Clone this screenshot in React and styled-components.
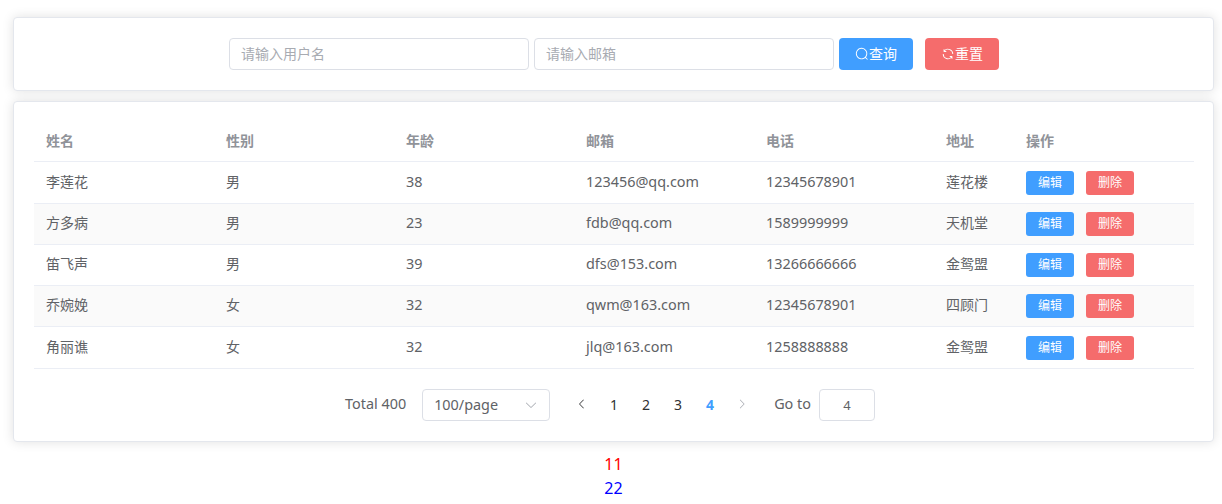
import React from 'react';
import styled, { createGlobalStyle } from 'styled-components';

const GlobalStyle = createGlobalStyle`
    html, body {
        margin: 0;
        padding: 0;
        background: #fff;
    }
    body {
        font-family: "Noto Sans", "Noto Sans CJK SC", sans-serif;
        font-size: 14px;
        color: #606266;
    }
    * {
        box-sizing: border-box;
    }
`;

const Page = styled.div`
    padding: 17px 8px 0 13px;
`;

const Card = styled.div`
    background: #fff;
    border: 1px solid #e4e7ed;
    border-radius: 4px;
    box-shadow: 0 0 12px rgba(0, 0, 0, 0.12);
`;

const SearchCard = styled(Card)`
    height: 74px;
    margin-bottom: 10px;
    padding-left: 215px;
    display: flex;
    align-items: center;
`;

const TextField = styled.input`
    width: 300px;
    height: 32px;
    margin-right: 5px;
    padding: 0 11px 2px;
    border: 1px solid #dcdfe6;
    border-radius: 4px;
    outline: none;
    font: inherit;
    color: #606266;

    &::placeholder {
        color: #a8abb2;
    }
`;

const Button = styled.button`
    display: inline-flex;
    align-items: center;
    justify-content: center;
    width: ${p => (p.$small ? '48px' : '74px')};
    height: ${p => (p.$small ? '24px' : '32px')};
    padding: 0 0 2px;
    border: none;
    border-radius: ${p => (p.$small ? '3px' : '4px')};
    background: ${p => (p.$danger ? '#f56c6c' : '#409eff')};
    color: #fff;
    font-family: inherit;
    font-size: ${p => (p.$small ? '12px' : '14px')};
    margin-left: ${p => p.$gap || 0}px;

    svg {
        width: 14px;
        height: 14px;
        margin-top: 2px;
    }
`;

const TableCard = styled(Card)`
    padding: 19px 19px 20px 20px;
`;

const Table = styled.table`
    width: 1160px;
    table-layout: fixed;
    border-collapse: collapse;
`;

const HeadCell = styled.th`
    width: ${p => p.$width};
    height: 40px;
    padding: 0 12px 1px;
    border-bottom: 1px solid #ebeef5;
    text-align: left;
    font-weight: 700;
    color: #909399;
`;

const Row = styled.tr`
    height: ${p => (p.$tall ? '42px' : '41px')};
    background: ${p => (p.$striped ? '#fafafa' : '#fff')};
`;

const Cell = styled.td`
    padding: 0 12px ${p => (p.$latin ? '2px' : '3px')};
    border-bottom: 1px solid #ebeef5;
    color: #606266;
    font-size: ${p => (p.$latin ? '14.4px' : '14px')};
`;

const ActionCell = styled(Cell)`
    padding-top: ${p => (p.$tall ? '1px' : '0')};
    padding-bottom: 0;
`;

const Pagination = styled.div`
    display: flex;
    align-items: center;
    height: 32px;
    margin-top: 20px;
    padding-left: 311px;
    font-size: 14.4px;
`;

const Total = styled.span`
    margin-right: 16px;
    padding-bottom: 2px;
`;

const SizeSelect = styled.div`
    width: 128px;
    height: 32px;
    margin-right: 16px;
    padding: 0 11px;
    border: 1px solid #dcdfe6;
    border-radius: 4px;
    display: flex;
    align-items: center;
    justify-content: space-between;

    svg {
        width: 14px;
        height: 14px;
        color: #a8abb2;
    }
`;

const Pager = styled.div`
    display: flex;
    align-items: center;
    margin-right: 16px;
`;

const PageItem = styled.span`
    width: 32px;
    height: 32px;
    padding-bottom: 1px;
    display: flex;
    align-items: center;
    justify-content: center;
    font-size: 14px;
    font-weight: ${p => (p.$active ? 700 : 400)};
    color: ${p => (p.$active ? '#409eff' : p.$muted ? '#a8abb2' : '#303133')};

    svg {
        width: 12px;
        height: 12px;
    }
`;

const JumpLabel = styled.span`
    padding-bottom: 2px;
`;

const JumpBox = styled.div`
    width: 56px;
    height: 32px;
    margin-left: 8px;
    border: 1px solid #dcdfe6;
    border-radius: 4px;
    display: flex;
    align-items: center;
    justify-content: center;
    font-size: 13px;
`;

const Footer = styled.div`
    padding-top: 10px;
    text-align: center;
    font-size: 16px;
    line-height: 24px;
`;

const FooterLine = styled.div`
    color: ${p => p.$color};
`;

const Icon = ({ d }) => (
    <svg viewBox="0 0 1024 1024" fill="currentColor">
        <path d={d} />
    </svg>
);

const SEARCH = 'm795.904 750.72 124.992 124.928a32 32 0 0 1-45.248 45.248L750.656 795.904a416 416 0 1 1 45.248-45.248zM480 832a352 352 0 1 0 0-704 352 352 0 0 0 0 704z';
const REFRESH = 'M771.776 794.88A384 384 0 0 1 128 512h64a320 320 0 0 0 555.712 216.448H654.72a32 32 0 1 1 0-64h149.056a32 32 0 0 1 32 32v148.928a32 32 0 1 1-64 0v-50.56zM276.288 295.616h92.992a32 32 0 0 1 0 64H220.16a32 32 0 0 1-32-32V178.56a32 32 0 0 1 64 0v50.56A384 384 0 0 1 896.128 512h-64a320 320 0 0 0-555.776-216.384z';
const ARROW_DOWN = 'M831.872 340.864 512 652.672 192.128 340.864a30.592 30.592 0 0 0-42.752 0 29.12 29.12 0 0 0 0 41.6L489.664 714.24a32 32 0 0 0 44.672 0l340.288-331.712a29.12 29.12 0 0 0 0-41.728 30.592 30.592 0 0 0-42.752 0z';
const ARROW_LEFT = 'M609.408 149.376 277.76 489.6a32 32 0 0 0 0 44.672l331.648 340.352a29.12 29.12 0 0 0 41.728 0 30.592 30.592 0 0 0 0-42.752L339.264 511.936l311.872-319.872a30.592 30.592 0 0 0 0-42.688 29.12 29.12 0 0 0-41.728 0z';
const ARROW_RIGHT = 'M340.864 149.312a30.592 30.592 0 0 0 0 42.752L652.736 512 340.864 831.872a30.592 30.592 0 0 0 0 42.752 29.12 29.12 0 0 0 41.728 0L714.24 534.336a32 32 0 0 0 0-44.672L382.592 149.376a29.12 29.12 0 0 0-41.728 0z';

const columns = [
    ['姓名', '180px'],
    ['性别', '180px'],
    ['年龄', '180px'],
    ['邮箱', '180px'],
    ['电话', '180px'],
    ['地址', '80px'],
    ['操作', '180px'],
];

const users = [
    ['李莲花', '男', '38', '123456@qq.com', '12345678901', '莲花楼'],
    ['方多病', '男', '23', 'fdb@qq.com', '1589999999', '天机堂'],
    ['笛飞声', '男', '39', 'dfs@153.com', '13266666666', '金鸳盟'],
    ['乔婉娩', '女', '32', 'qwm@163.com', '12345678901', '四顾门'],
    ['角丽谯', '女', '32', 'jlq@163.com', '1258888888', '金鸳盟'],
];

const isLatin = j => j >= 2 && j <= 4;

const App = () => {
    return (
        <Page>
            <GlobalStyle />
            <SearchCard>
                <TextField placeholder="请输入用户名" />
                <TextField placeholder="请输入邮箱" />
                <Button><Icon d={SEARCH} />查询</Button>
                <Button $danger $gap={12}><Icon d={REFRESH} />重置</Button>
            </SearchCard>
            <TableCard>
                <Table>
                    <thead>
                        <tr>
                            {columns.map(([label, width]) => (
                                <HeadCell key={label} $width={width}>{label}</HeadCell>
                            ))}
                        </tr>
                    </thead>
                    <tbody>
                        {users.map((user, i) => {
                            const tall = i === 0 || i === users.length - 1;
                            return (
                                <Row key={user[0]} $striped={i % 2 === 1} $tall={tall}>
                                    {user.map((value, j) => <Cell key={j} $latin={isLatin(j)}>{value}</Cell>)}
                                    <ActionCell $tall={tall}>
                                        <Button $small>编辑</Button>
                                        <Button $small $danger $gap={12}>删除</Button>
                                    </ActionCell>
                                </Row>
                            );
                        })}
                    </tbody>
                </Table>
                <Pagination>
                    <Total>Total 400</Total>
                    <SizeSelect>100/page<Icon d={ARROW_DOWN} /></SizeSelect>
                    <Pager>
                        <PageItem><Icon d={ARROW_LEFT} /></PageItem>
                        <PageItem>1</PageItem>
                        <PageItem>2</PageItem>
                        <PageItem>3</PageItem>
                        <PageItem $active>4</PageItem>
                        <PageItem $muted><Icon d={ARROW_RIGHT} /></PageItem>
                    </Pager>
                    <JumpLabel>Go to</JumpLabel>
                    <JumpBox>4</JumpBox>
                </Pagination>
            </TableCard>
            <Footer>
                <FooterLine $color="#ff0000">11</FooterLine>
                <FooterLine $color="#0000ff">22</FooterLine>
            </Footer>
        </Page>
    );
};

export default App;
